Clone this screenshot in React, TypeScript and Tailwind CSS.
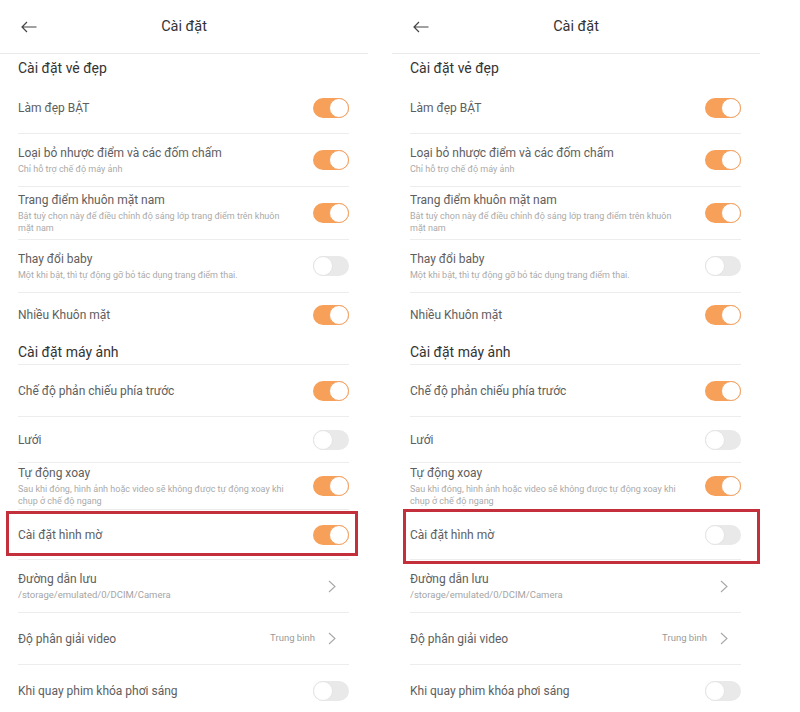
import React from 'react';

type Row =
  | { kind: 'section'; title: string; h: string; border?: boolean; pad?: string }
  | { kind: 'toggle'; title: string; sub?: string[]; on?: boolean; blur?: boolean; h: string; border?: boolean }
  | { kind: 'link'; title: string; sub?: string; value?: string; h: string; border?: boolean };

const rows: Row[] = [
  { kind: 'section', title: 'Cài đặt vẻ đẹp', h: 'h-[28px]' },
  { kind: 'toggle', title: 'Làm đẹp BẬT', on: true, h: 'h-[52px]', border: true },
  { kind: 'toggle', title: 'Loại bỏ nhược điểm và các đốm chấm', sub: ['Chỉ hỗ trợ chế độ máy ảnh'], on: true, h: 'h-[53px]', border: true },
  {
    kind: 'toggle',
    title: 'Trang điểm khuôn mặt nam',
    sub: ['Bật tuỳ chọn này để điều chỉnh độ sáng lớp trang điểm trên khuôn', 'mặt nam'],
    on: true,
    h: 'h-[53px]',
    border: true,
  },
  { kind: 'toggle', title: 'Thay đổi baby', sub: ['Một khi bật, thì tự động gỡ bỏ tác dụng trang điểm thai.'], h: 'h-[53px]', border: true },
  { kind: 'toggle', title: 'Nhiều Khuôn mặt', on: true, h: 'h-[44px]' },
  { kind: 'section', title: 'Cài đặt máy ảnh', h: 'h-[28px]', border: true, pad: 'pt-[4px]' },
  { kind: 'toggle', title: 'Chế độ phản chiếu phía trước', on: true, h: 'h-[52px]', border: true },
  { kind: 'toggle', title: 'Lưới', h: 'h-[46px]', border: true },
  {
    kind: 'toggle',
    title: 'Tự động xoay',
    sub: ['Sau khi đóng, hình ảnh hoặc video sẽ không được tự động xoay khi', 'chụp ở chế độ ngang'],
    on: true,
    h: 'h-[47px]',
    border: true,
  },
  { kind: 'toggle', title: 'Cài đặt hình mờ', blur: true, h: 'h-[50px]', border: true },
  { kind: 'link', title: 'Đường dẫn lưu', sub: '/storage/emulated/0/DCIM/Camera', h: 'h-[53px]', border: true },
  { kind: 'link', title: 'Độ phân giải video', value: 'Trung bình', h: 'h-[52px]', border: true },
  { kind: 'toggle', title: 'Khi quay phim khóa phơi sáng', h: 'h-[52px]', border: true },
];

const Toggle = ({ on }: { on?: boolean }) =>
  on ? (
    <div className="flex h-[20px] w-[36px] shrink-0 items-center justify-end rounded-full bg-[#f7a059]">
      <div className="h-[20px] w-[20px] rounded-full border border-[#f2a366] bg-white" />
    </div>
  ) : (
    <div className="flex h-[20px] w-[36px] shrink-0 items-center justify-start rounded-full bg-[#e9e9e9]">
      <div className="h-[20px] w-[20px] rounded-full border border-[#e4e4e4] bg-white" />
    </div>
  );

const Chevron = () => (
  <svg width="8" height="13" viewBox="0 0 8 13" className="shrink-0">
    <path d="M1 1l6 5.5L1 12" fill="none" stroke="#a8a8a8" strokeWidth="1.1" />
  </svg>
);

const Panel = ({ blurOn, box }: { blurOn: boolean; box: string }) => (
  <div className="relative w-[368px] shrink-0">
    <div className="relative flex h-[54px] items-center justify-center border-b border-[#e9e9e9]">
      <svg width="16" height="12" viewBox="0 0 16 12" className="absolute left-[21px] top-[21px]">
        <path d="M15.5 6H1M6 1L1 6l5 5" fill="none" stroke="#444" strokeWidth="1.2" />
      </svg>
      <span className="text-[14.5px] text-[#333]">Cài đặt</span>
    </div>
    <div className="pl-[18px] pr-[19px]">
      {rows.map((row) => {
        const line = row.border ? 'border-b border-[#ededed]' : '';
        if (row.kind === 'section') {
          return (
            <div key={row.title} className={`flex items-center text-[14px] text-[#333] ${row.h} ${line} ${row.pad ?? ''}`}>
              {row.title}
            </div>
          );
        }
        if (row.kind === 'link') {
          return (
            <div key={row.title} className={`flex items-center ${row.h} ${line}`}>
              <div className="flex flex-1 flex-col">
                <span className="text-[12px] leading-4 text-[#5e5e5e]">{row.title}</span>
                {row.sub && (
                  <span className="mt-[2px] text-[9.5px] leading-3 text-[#a5a5a5]">{row.sub}</span>
                )}
              </div>
              {row.value && <span className="mr-[13px] text-[9.5px] text-[#9a9a9a]">{row.value}</span>}
              <div className="mr-[13px]">
                <Chevron />
              </div>
            </div>
          );
        }
        const on = row.blur ? blurOn : row.on;
        return (
          <div key={row.title} className={`flex items-center ${row.h} ${line}`}>
            <div className="flex flex-1 flex-col">
              <span className="text-[12px] leading-4 text-[#5e5e5e]">{row.title}</span>
              {row.sub && (
                <div className="mt-[2px] flex flex-col">
                  {row.sub.map((s) => (
                    <span key={s} className="text-[9px] leading-3 text-[#aaaaaa]">
                      {s}
                    </span>
                  ))}
                </div>
              )}
            </div>
            <Toggle on={on} />
          </div>
        );
      })}
    </div>
    <div className={`pointer-events-none absolute border-[3px] border-[#c3303b] ${box}`} />
  </div>
);

export default function App() {
  return (
    <div className="flex h-[712px] w-[800px] gap-6 overflow-hidden bg-white font-['Roboto','Noto_Sans',sans-serif]">
      <Panel blurOn={true} box="left-[6px] top-[511px] h-[45px] w-[352px]" />
      <Panel blurOn={false} box="left-[11px] top-[509px] h-[55px] w-[357px]" />
    </div>
  );
}
